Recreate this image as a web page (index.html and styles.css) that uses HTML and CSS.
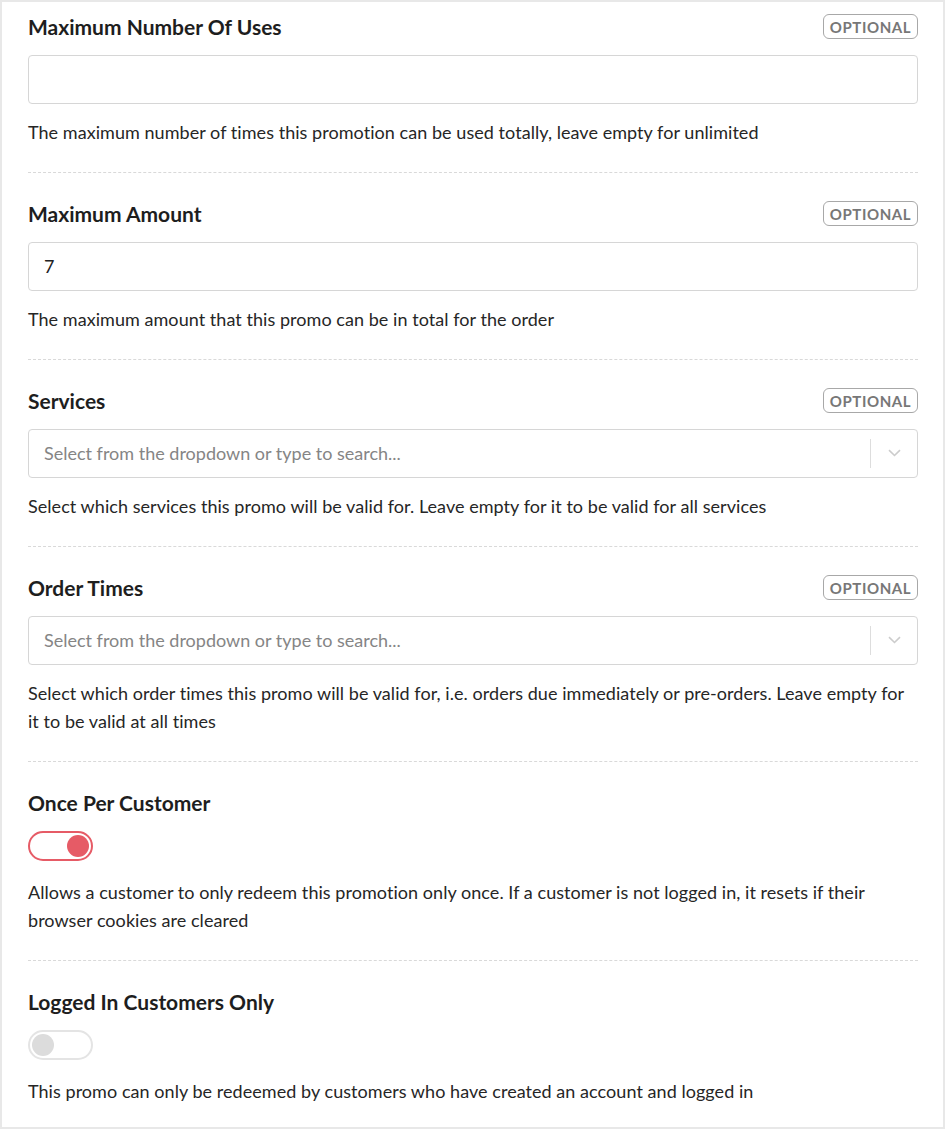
FILE: index.html
```html
<!DOCTYPE html>
<html>
<head>
<meta charset="utf-8">
<link rel="stylesheet" href="styles.css">
</head>
<body>
<div class="panel">
  <div class="field">
    <div class="field-head">
      <div class="label">Maximum Number Of Uses</div>
      <span class="badge">OPTIONAL</span>
    </div>
    <div class="input"></div>
    <p class="help">The maximum number of times this promotion can be used totally, leave empty for unlimited</p>
  </div>
  <div class="field">
    <div class="field-head">
      <div class="label">Maximum Amount</div>
      <span class="badge">OPTIONAL</span>
    </div>
    <div class="input"><span class="value">7</span></div>
    <p class="help">The maximum amount that this promo can be in total for the order</p>
  </div>
  <div class="field">
    <div class="field-head">
      <div class="label">Services</div>
      <span class="badge">OPTIONAL</span>
    </div>
    <div class="input select">
      <span class="placeholder">Select from the dropdown or type to search...</span>
      <span class="sep"></span>
      <span class="chev"><svg width="13" height="8" viewBox="0 0 13 8"><path d="M1 1.2 L6.5 6.5 L12 1.2" fill="none" stroke="#cccccc" stroke-width="1.6"/></svg></span>
    </div>
    <p class="help">Select which services this promo will be valid for. Leave empty for it to be valid for all services</p>
  </div>
  <div class="field">
    <div class="field-head">
      <div class="label">Order Times</div>
      <span class="badge">OPTIONAL</span>
    </div>
    <div class="input select">
      <span class="placeholder">Select from the dropdown or type to search...</span>
      <span class="sep"></span>
      <span class="chev"><svg width="13" height="8" viewBox="0 0 13 8"><path d="M1 1.2 L6.5 6.5 L12 1.2" fill="none" stroke="#cccccc" stroke-width="1.6"/></svg></span>
    </div>
    <p class="help">Select which order times this promo will be valid for, i.e. orders due immediately or pre-orders. Leave empty for it to be valid at all times</p>
  </div>
  <div class="field">
    <div class="field-head">
      <div class="label">Once Per Customer</div>
    </div>
    <div class="toggle on"><span class="knob"></span></div>
    <p class="help toggle-help">Allows a customer to only redeem this promotion only once. If a customer is not logged in, it resets if their browser cookies are cleared</p>
  </div>
  <div class="field last">
    <div class="field-head">
      <div class="label">Logged In Customers Only</div>
    </div>
    <div class="toggle"><span class="knob"></span></div>
    <p class="help toggle-help">This promo can only be redeemed by customers who have created an account and logged in</p>
  </div>
</div>
</body>
</html>
```
FILE: styles.css
```css
* { box-sizing: border-box; }
html, body { margin: 0; padding: 0; background: #ffffff; }
body {
  font-family: Lato, "Open Sans", "Liberation Sans", sans-serif;
  color: #222222;
  width: 945px;
  height: 1129px;
}
.panel {
  width: 945px;
  height: 1129px;
  border: 2px solid #e8e8e8;
  padding: 0 25px 0 26px;
  background: #ffffff;
}
.field {
  padding: 29px 0 26px;
  border-bottom: 1px dashed #d9d9d9;
}
.field:first-child { padding-top: 12.5px; }
.field.last { border-bottom: none; }
.field-head {
  display: flex;
  align-items: center;
  justify-content: space-between;
  height: 24px;
  margin-bottom: 16px;
}
.label {
  font-size: 21px;
  font-weight: 700;
  line-height: 24px;
  color: #1e1e1e;
}
.badge {
  display: inline-flex;
  align-items: center;
  justify-content: center;
  height: 25px;
  width: 95px;
  border: 1px solid #a8a8a8;
  border-radius: 6px;
  font-size: 15px;
  font-weight: 700;
  letter-spacing: 0.6px;
  color: #777777;
}
.input {
  height: 49px;
  border: 1px solid #d6d6d6;
  border-radius: 4px;
  display: flex;
  align-items: center;
  padding: 0 15px;
}
.value {
  font-size: 18px;
  color: #222222;
}
.select { padding-right: 0; }
.placeholder {
  flex: 1;
  font-size: 18px;
  color: #858585;
}
.sep {
  width: 1px;
  height: 29px;
  background: #dddddd;
}
.chev {
  width: 46px;
  display: flex;
  justify-content: center;
  align-items: center;
}
.help {
  margin: 14px 0 0;
  font-size: 18px;
  line-height: 28px;
  letter-spacing: 0.05px;
  color: #262626;
}
.help.toggle-help { margin-top: 17px; }
.toggle {
  width: 65px;
  height: 30px;
  border: 2px solid #e4e4e4;
  border-radius: 15px;
  padding: 2px;
  display: flex;
  justify-content: flex-start;
}
.toggle .knob {
  width: 22px;
  height: 22px;
  border-radius: 50%;
  background: #dcdcdc;
}
.toggle.on {
  border-color: #e65b66;
  justify-content: flex-end;
}
.toggle.on .knob { background: #e65b66; }
```
